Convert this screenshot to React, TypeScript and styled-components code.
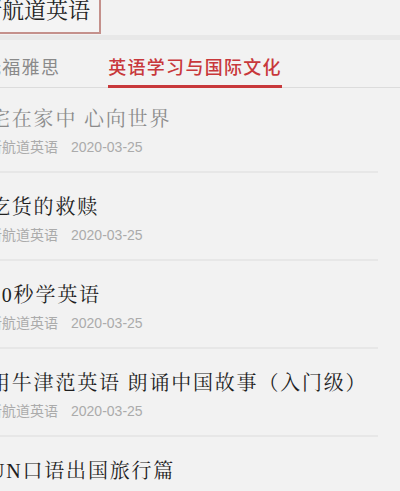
import React from "react";
import styled, { createGlobalStyle } from "styled-components";

const Global = createGlobalStyle`
  html, body {
    margin: 0;
    padding: 0;
    background: #f2f2f2;
    overflow: hidden;
  }
  body {
    font-family: "Noto Sans CJK SC", "Noto Sans", sans-serif;
  }
`;

const Page = styled.div`
  width: 400px;
  min-height: 491px;
  background: #f2f2f2;
  overflow: hidden;
`;

const Header = styled.header`
  height: 35px;
  display: flex;
  align-items: flex-start;
`;

const BrandBox = styled.div`
  margin: -8px 0 0 -42px;
  padding: 0 9px 9px 20px;
  border: 2px solid #c4908b;
  background: #f4f4f4;
`;

const BrandName = styled.h1`
  margin: 0;
  font-family: "Noto Serif CJK SC", "Noto Sans CJK SC", serif;
  font-weight: 400;
  font-size: 22px;
  line-height: 29px;
  color: #222;
`;

const Band = styled.div`
  height: 5px;
  background: #e8e8e8;
`;

const TabBar = styled.nav`
  box-sizing: border-box;
  height: 48px;
  padding-top: 14px;
  border-bottom: 1px solid #dcdcdc;
  display: flex;
  align-items: flex-start;
  gap: 48px;
`;

const Tab = styled.div<{ $active?: boolean }>`
  font-family: "Noto Sans CJK SC", sans-serif;
  font-size: 18px;
  line-height: 24px;
  letter-spacing: 1.3px;
  font-weight: ${(p) => (p.$active ? 500 : 400)};
  color: ${(p) => (p.$active ? "#c8383b" : "#8a8a8a")};
  padding-bottom: 7px;
  border-bottom: 3px solid ${(p) => (p.$active ? "#c8383b" : "transparent")};
  margin-bottom: -1px;
  white-space: nowrap;
  &:first-child {
    margin-left: -17px;
  }
`;

const List = styled.ul`
  list-style: none;
  margin: 0;
  padding: 0;
`;

const Item = styled.li`
  margin: 0 22px 0 -10px;
  padding: 19px 0 14px;
  border-bottom: 2px solid #e7e7e7;
  &:first-child {
    padding-top: 16px;
  }
`;

const Title = styled.div<{ $visited?: boolean }>`
  font-family: "Liberation Serif", "Noto Serif CJK SC", "Noto Sans CJK SC", serif;
  font-size: 20px;
  line-height: 30px;
  letter-spacing: 1.8px;
  color: ${(p) => (p.$visited ? "#8c8c8c" : "#1f1f1f")};
  white-space: nowrap;
`;

const Meta = styled.div`
  margin: 3px 0 0 -2px;
  display: flex;
  gap: 13px;
  font-family: "Liberation Sans", "Noto Sans CJK SC", sans-serif;
  font-size: 14px;
  line-height: 20px;
  color: #ababab;
`;

const items = [
  { title: "宅在家中 心向世界", visited: true },
  { title: "吃货的救赎" },
  { title: "60秒学英语" },
  { title: "用牛津范英语 朗诵中国故事（入门级）" },
  { title: "UN口语出国旅行篇" },
];

export default function App() {
  return (
    <Page>
      <Global />
      <Header>
        <BrandBox>
          <BrandName>新航道英语</BrandName>
        </BrandBox>
      </Header>
      <Band />
      <TabBar>
        <Tab>托福雅思</Tab>
        <Tab $active>英语学习与国际文化</Tab>
      </TabBar>
      <List>
        {items.map((it) => (
          <Item key={it.title}>
            <Title $visited={it.visited}>{it.title}</Title>
            <Meta>
              <span>新航道英语</span>
              <span>2020-03-25</span>
            </Meta>
          </Item>
        ))}
      </List>
    </Page>
  );
}
